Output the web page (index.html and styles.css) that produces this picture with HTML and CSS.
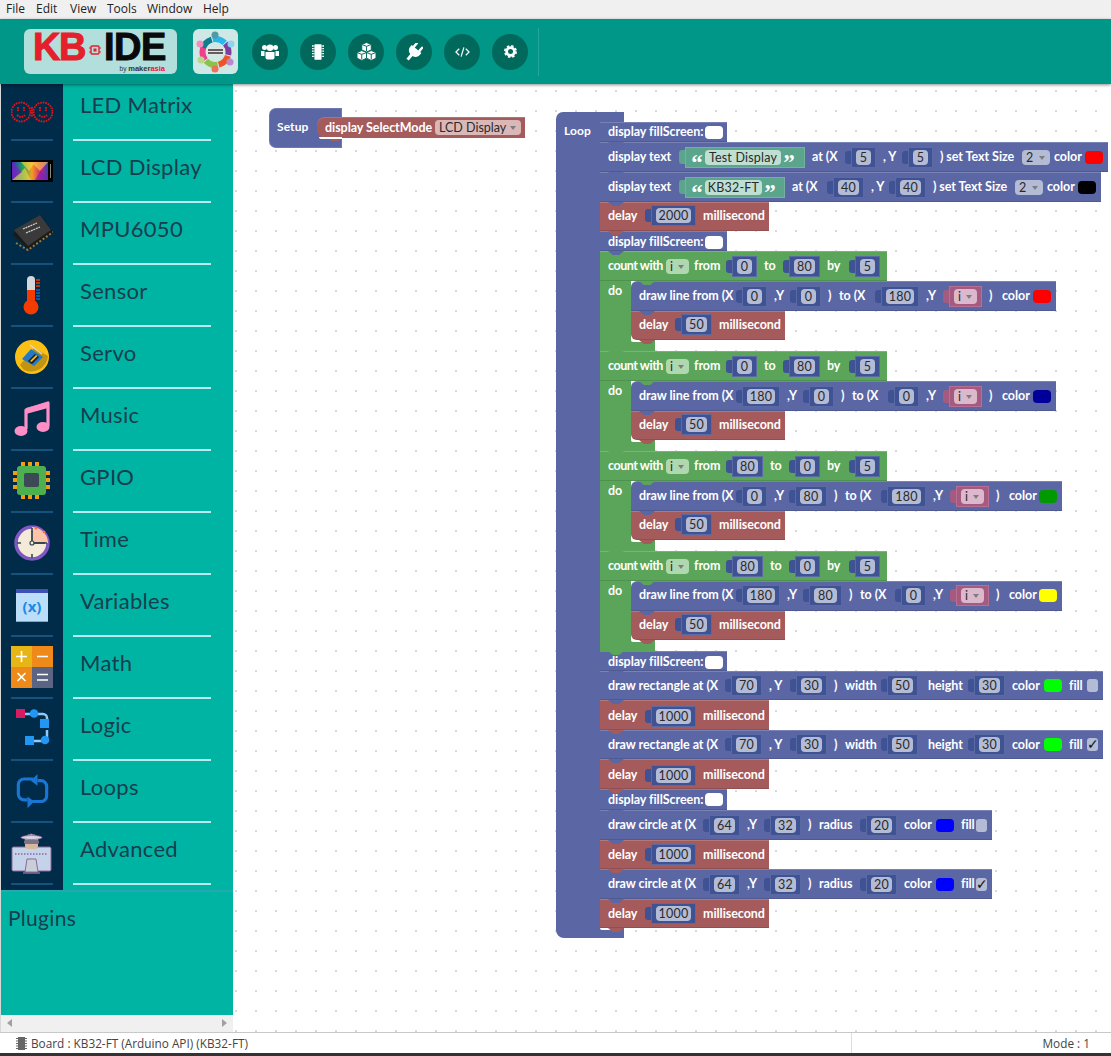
FILE: index.html
```html
<!DOCTYPE html>
<html lang="en">
<head>
<meta charset="utf-8">
<title>KB-IDE</title>
<link rel="stylesheet" href="styles.css">
</head>
<body>
<div class="app">
  <nav class="menubar"><span class="mi-file">File</span><span class="mi-edit">Edit</span><span class="mi-view">View</span><span class="mi-tools">Tools</span><span class="mi-window">Window</span><span class="mi-help">Help</span></nav>

  <header class="toolbar">
    <div class="logo">
      <span class="kb">KB</span>
      <svg class="logo-chip" viewBox="0 0 12 12" width="12" height="12"><rect x="2" y="2" width="8" height="8" rx="1" fill="none" stroke="#e3202c" stroke-width="1.4"/><rect x="4.5" y="4.5" width="3" height="3" fill="#e3202c"/><path d="M0 4h2M0 8h2M10 4h2M10 8h2" stroke="#e3202c"/></svg>
      <span class="ide">IDE</span>
      <span class="by">by <b>maker</b><b class="asia">asia</b></span>
    </div>
    <div class="community">
      <svg viewBox="0 0 45 45" width="45" height="45">
        <circle cx="22.500" cy="23" r="13" fill="none" stroke="#0f7d8c" stroke-width="6" stroke-dasharray="13 69" stroke-dashoffset="38"/>
        <circle cx="22.500" cy="23" r="13" fill="none" stroke="#29b6e8" stroke-width="6" stroke-dasharray="13 69" stroke-dashoffset="24"/>
        <circle cx="22.500" cy="23" r="13" fill="none" stroke="#7b3fa0" stroke-width="6" stroke-dasharray="13 69" stroke-dashoffset="10"/>
        <circle cx="22.500" cy="23" r="13" fill="none" stroke="#ef5326" stroke-width="6" stroke-dasharray="13 69" stroke-dashoffset="-4"/>
        <circle cx="22.500" cy="23" r="13" fill="none" stroke="#8bc34a" stroke-width="6" stroke-dasharray="13 69" stroke-dashoffset="-18"/>
        <circle cx="22.500" cy="23" r="13" fill="none" stroke="#ec3f8c" stroke-width="6" stroke-dasharray="13 69" stroke-dashoffset="-32"/>
        <circle cx="22" cy="6" r="3.500" fill="#4e9aa6"/><circle cx="38" cy="15" r="3.500" fill="#8fd3ee"/><circle cx="37" cy="33" r="3.500" fill="#b78ad0"/><circle cx="22" cy="40" r="3.500" fill="#f0705a"/><circle cx="8" cy="31" r="3.500" fill="#b5d98c"/><circle cx="7" cy="15" r="3.500" fill="#f28cbc"/>
        <rect x="13" y="19" width="19" height="7" rx="1" fill="#e4e4e4"/><path d="M15 21h15M15 24h15" stroke="#333" stroke-width="1.300"/>
      </svg>
    </div>
    <div class="tools">
      <span class="tool"><svg viewBox="0 0 18 16" width="18" height="16" fill="#fff"><circle cx="3.500" cy="3.500" r="2.500"/><circle cx="14.500" cy="3.500" r="2.500"/><circle cx="9" cy="3.800" r="3.300"/><path d="M0 7h3.500v5H0zM14.500 7H18v5h-3.500z"/><path d="M4.500 8h9v5.500a2 2 0 0 1-2 2h-5a2 2 0 0 1-2-2z"/></svg></span>
      <span class="tool"><svg viewBox="0 0 14 18" width="12" height="16" fill="#fff"><rect x="2.500" y="0" width="9" height="18" rx="1"/><path d="M0 2h14M0 5h14M0 8h14M0 11h14M0 14h14" stroke="#fff" stroke-width="1.500"/><path d="M2.500 0v18M11.500 0v18" stroke="#00695c" stroke-width=".6"/></svg></span>
      <span class="tool"><svg viewBox="0 0 22 20" width="21" height="19"><g fill="#fff" stroke="#00695c" stroke-width="1"><path d="M11 .5l5 2v6l-5 2-5-2v-6z"/><path d="M6 9l5 2v6l-5 2.500-5-2.500v-6z"/><path d="M16 9l5 2v6l-5 2.500-5-2.500v-6z"/></g><path d="M6.500 2.800l4.500 1.800 4.500-1.800M11 4.600v5M1.500 11.300L6 13l4.500-1.700M6 13v5.500M11.500 11.300L16 13l4.500-1.700M16 13v5.500" fill="none" stroke="#00695c" stroke-width="1"/></svg></span>
      <span class="tool"><svg viewBox="0 0 18 18" width="18" height="18" fill="#fff"><g transform="rotate(40 9 9)"><rect x="4.300" y="-.5" width="2.400" height="6" rx=".6"/><rect x="11.300" y="-.5" width="2.400" height="6" rx=".6"/><path d="M2.700 5h12.600v2.500a6 6 0 0 1-4.800 5.500V19h-3v-6a6 6 0 0 1-4.800-5.500z"/></g></svg></span>
      <span class="tool"><svg viewBox="0 0 16 12" width="15" height="12" fill="none" stroke="#fff" stroke-width="1.300"><path d="M4.500 2.500L1 6l3.500 3.500M11.500 2.500L15 6l-3.500 3.500M9.500 1L6.500 11"/></svg></span>
      <span class="tool"><svg viewBox="0 0 16 16" width="13" height="13"><circle cx="8" cy="8" r="4.800" fill="none" stroke="#fff" stroke-width="3.400"/><circle cx="8" cy="8" r="7" fill="none" stroke="#fff" stroke-width="2" stroke-dasharray="3 2.500"/></svg></span>
    </div>
    <span class="tool-divider"></span>
  </header>

  <main class="main">
    <aside class="sidebar">
      <div class="cats">
        <div class="cat cat-first">
          <div class="cat-icon"><svg viewBox="0 0 42 24" width="42" height="24"><g fill="none" stroke="#e0141c" stroke-width="1.900" stroke-dasharray="1.700 .9"><circle cx="10" cy="12" r="9.500"/><circle cx="32" cy="12" r="9.500"/><path d="M7 7v4M13 7v4M29 7v4M35 7v4M6 15q4 4 8 0M28 15q4 4 8 0M21 7v10"/></g></svg></div>
          <div class="cat-label">LED Matrix</div>
        </div>
        <div class="cat">
          <div class="cat-icon"><svg viewBox="0 0 42 22" width="42" height="22"><defs><linearGradient id="lcd" x1="0" y1="0" x2="1" y2="0"><stop offset="0" stop-color="#3a2bc8"/><stop offset=".3" stop-color="#1fa35a"/><stop offset=".55" stop-color="#f4a020"/><stop offset=".8" stop-color="#d4206c"/><stop offset="1" stop-color="#3040c0"/></linearGradient></defs><rect width="42" height="22" fill="#000"/><rect x="1" y="2" width="36" height="18" fill="url(#lcd)"/><path d="M1 20L14 8l6 12zM20 2l9 9 8-9zM10 2l8 9 6-9z" fill="#ffd94a" opacity=".6"/><path d="M1 2l10 10L1 20zM24 20l6-10 7 10z" fill="#7d1fc0" opacity=".7"/><rect x="39" y="4" width="1" height="14" fill="#888"/></svg></div>
          <div class="cat-label">LCD Display</div>
        </div>
        <div class="cat">
          <div class="cat-icon"><svg viewBox="0 0 42 38" width="42" height="38"><path d="M1 20L29 1l13 17-24 18z" fill="#1a1a1a"/><path d="M3 16L29 1l11 15-23 16z" fill="#3a3a3a"/><path d="M5 29l12 7 25-18" fill="none" stroke="#a07a35" stroke-width="2" stroke-dasharray="2 2"/><path d="M12 15l14-6M15 19l14-6" stroke="#ccc" stroke-width="1.300" stroke-dasharray="2 .7"/></svg></div>
          <div class="cat-label">MPU6050</div>
        </div>
        <div class="cat">
          <div class="cat-icon"><svg viewBox="0 0 42 40" width="42" height="40"><rect x="16" y="1" width="8" height="26" rx="4" fill="#d4d8dc"/><rect x="16" y="15" width="8" height="14" fill="#f43b00"/><circle cx="20" cy="32" r="7.500" fill="#f43b00"/><path d="M25 5h4M25 8h4M25 11h4" stroke="#f43b00" stroke-width="1.500"/><path d="M25 15h4M25 18h4M25 21h4M25 24h4" stroke="#1565c0" stroke-width="1.500"/></svg></div>
          <div class="cat-label">Sensor</div>
        </div>
        <div class="cat">
          <div class="cat-icon"><svg viewBox="0 0 42 42" width="42" height="42"><circle cx="21" cy="21" r="17" fill="#fcc015"/><path d="M9 29l14-17 14 8a17 17 0 0 1-24 14z" fill="#c39312"/><path d="M11 23l9-10 12 8-9 9z" fill="#2179c8"/><path d="M17 25l7-7 4 3-7 7z" fill="#1a1a1a"/><path d="M19 25l6-6 1.500 1-6 6z" fill="#fcc015"/><path d="M19 9l12 9" stroke="#d8d8d8" stroke-width="1.200"/></svg></div>
          <div class="cat-label">Servo</div>
        </div>
        <div class="cat">
          <div class="cat-icon"><svg viewBox="0 0 42 38" width="42" height="38"><path d="M15 29V10L37 3v23" fill="none" stroke="#fd8fc6" stroke-width="3.200" stroke-linejoin="round"/><path d="M15 8l22-6v6l-22 6z" fill="#fd8fc6"/><ellipse cx="10" cy="31" rx="6.500" ry="5" fill="#fd8fc6"/><ellipse cx="32" cy="27" rx="6.500" ry="5" fill="#fd8fc6"/></svg></div>
          <div class="cat-label">Music</div>
        </div>
        <div class="cat">
          <div class="cat-icon"><svg viewBox="0 0 42 42" width="42" height="42"><g fill="#f39c12"><rect x="10" y="2" width="4" height="5"/><rect x="17" y="2" width="4" height="5"/><rect x="24" y="2" width="4" height="5"/><rect x="10" y="34" width="4" height="5"/><rect x="17" y="34" width="4" height="5"/><rect x="24" y="34" width="4" height="5"/><rect x="2" y="11" width="5" height="4"/><rect x="2" y="18" width="5" height="4"/><rect x="2" y="25" width="5" height="4"/><rect x="34" y="11" width="5" height="4"/><rect x="34" y="18" width="5" height="4"/><rect x="34" y="25" width="5" height="4"/></g><rect x="6" y="6" width="29" height="29" rx="3" fill="#4caf50"/><rect x="13" y="13" width="15" height="14" rx="2" fill="#3c4a55"/></svg></div>
          <div class="cat-label">GPIO</div>
        </div>
        <div class="cat">
          <div class="cat-icon"><svg viewBox="0 0 42 42" width="42" height="42"><circle cx="21" cy="21" r="16" fill="#f3ead8" stroke="#7e57c2" stroke-width="3.500"/><path d="M21 21V5a16 16 0 0 1 16 16z" fill="#fbc3a8"/><path d="M21 6v4M21 32v4M6 21h4M32 21h4" stroke="#37474f" stroke-width="1.600"/><path d="M21 21V9M21 21h13" stroke="#37474f" stroke-width="1.800"/><circle cx="21" cy="21" r="2" fill="#f3ead8" stroke="#37474f" stroke-width="1.200"/><circle cx="25" cy="6" r="1.500" fill="#ff7043"/><circle cx="33" cy="10" r="1.300" fill="#ff7043"/></svg></div>
          <div class="cat-label">Time</div>
        </div>
        <div class="cat">
          <div class="cat-icon"><div class="var-icon"><span class="var-x">(x)</span></div></div>
          <div class="cat-label">Variables</div>
        </div>
        <div class="cat">
          <div class="cat-icon"><svg viewBox="0 0 42 42" width="42" height="42"><rect width="21" height="21" fill="#e8b516"/><rect x="21" width="21" height="21" fill="#ee8a1a"/><rect y="21" width="21" height="21" fill="#ee8a1a"/><rect x="21" y="21" width="21" height="21" fill="#5c6484"/><path d="M10.500 5v11M5 10.500h11M26 10.500h11M6.500 27l8 8M14.500 27l-8 8M26 28.500h11M26 34h11" stroke="#fff" stroke-width="1.600"/></svg></div>
          <div class="cat-label">Math</div>
        </div>
        <div class="cat">
          <div class="cat-icon"><svg viewBox="0 0 42 42" width="42" height="42"><path d="M8 6h24a4 4 0 0 1 4 4v8M36 22v10a1 1 0 0 1-1 1H16" fill="none" stroke="#90caf9" stroke-width="2.500"/><rect x="5" y="1" width="9" height="9" fill="#d81b60"/><circle cx="23" cy="5.500" r="4.300" fill="#2196f3"/><rect x="29" y="11" width="9" height="9" fill="#2196f3"/><rect x="14" y="28" width="9" height="9" fill="#2196f3"/><circle cx="34" cy="32" r="4.300" fill="#2196f3"/></svg></div>
          <div class="cat-label">Logic</div>
        </div>
        <div class="cat">
          <div class="cat-icon"><svg viewBox="0 0 42 42" width="35" height="35"><path d="M22 6H11a7 7 0 0 0-7 7v11a7 7 0 0 0 7 7h4M20 33h11a7 7 0 0 0 7-7V15a7 7 0 0 0-7-7h-4" fill="none" stroke="#1976d2" stroke-width="3.800"/><path d="M27 0l-8 8 8 6zM15 27l8 6-8 8z" fill="#1976d2"/></svg></div>
          <div class="cat-label">Loops</div>
        </div>
        <div class="cat">
          <div class="cat-icon"><svg viewBox="0 0 42 44" width="42" height="44"><rect x="1" y="16" width="39" height="24" rx="1.500" fill="#c5d3ea" stroke="#8a6a96" stroke-width="1"/><path d="M4 23h33" stroke="#8a6a96" stroke-width="1.500" stroke-dasharray="1.500 1.500"/><path d="M16 28h9l2 13H14z" fill="#c9ced8" stroke="#8a6a96"/><path d="M12 42h17" stroke="#8a6a96" stroke-width="1.500"/><path d="M14 7h13v8a3 3 0 0 1-3 3h-7a3 3 0 0 1-3-3z" fill="#d9b79e"/><rect x="13" y="9" width="15" height="4" rx="1.500" fill="#7a7488"/><path d="M14 6q6-6 13 0z" fill="#d8d4e2" stroke="#8a6a96" stroke-width=".8"/><ellipse cx="20.500" cy="6.500" rx="10.500" ry="2" fill="#d8d4e2" stroke="#8a6a96" stroke-width=".8"/></svg></div>
          <div class="cat-label">Advanced</div>
        </div>
      </div>
      <div class="plugins"><span class="plugins-title">Plugins</span></div>
      <div class="hscroll"><span class="arrow-left"></span><span class="arrow-right"></span></div>
    </aside>

    <section class="workspace">
      <div class="setup">
        <span class="side-text">Setup</span>
        <div class="setmode">
          <span class="l first w106">display SelectMode</span>
          <span class="dd dd-red w86">LCD Display</span>
        </div>
      </div>

      <div class="loop">
        <div class="cap"></div>
        <div class="loop-body">
          <div class="loop-side"><span class="side-text">Loop</span></div>
          <div class="stack">
            <div class="row blue h20"><span class="l first w93">display fillScreen:</span><span class="sw white"></span></div>

            <div class="row blue"><span class="l first w70">display text</span><span class="str w120"><i class="q">“</i><span class="sf w76">Test Display</span><i class="q">”</i></span><span class="l w33">at (X</span><span class="num n25"><b>5</b></span><span class="l w19">, Y</span><span class="num n25"><b>5</b></span><span class="l w78">) set Text Size</span><span class="dd dd-blue w28">2</span><span class="l w27 g4">color</span><span class="sw red"></span></div>

            <div class="row blue"><span class="l first w70">display text</span><span class="str w100"><i class="q">“</i><span class="sf w57">KB32-FT</span><i class="q">”</i></span><span class="l w35">at (X</span><span class="num n31"><b>40</b></span><span class="l w18">, Y</span><span class="num n31"><b>40</b></span><span class="l w78">) set Text Size</span><span class="dd dd-blue w28">2</span><span class="l w27 g4">color</span><span class="sw black"></span></div>

            <div class="row red-b h29 up"><span class="l first w37">delay</span><span class="num n45"><b>2000</b></span><span class="l w57 tail">millisecond</span></div>

            <div class="row blue h20 down"><span class="l first w93">display fillScreen:</span><span class="sw white"></span></div>

            <div class="count">
              <div class="row green c-head"><span class="l first w54 tight">count with</span><span class="dd dd-green w23">i</span><span class="l w32 g5">from</span><span class="num n25"><b>0</b></span><span class="l w19">to</span><span class="num n31"><b>80</b></span><span class="l w22">by</span><span class="num n25"><b>5</b></span></div>
              <div class="c-body">
                <div class="c-do">do</div>
                <div class="c-inner">
                  <div class="row blue c-first"><span class="l first w97">draw line from (X</span><span class="num n25"><b>0</b></span><span class="l w16">,Y</span><span class="num n25"><b>0</b></span><span class="l w4">)</span><span class="l w36">to (X</span><span class="num n38"><b>180</b></span><span class="l w17">,Y</span><span class="var w33"><span class="dd dd-pink">i</span></span><span class="l w6">)</span><span class="l w27">color</span><span class="sw red"></span></div>
                  <div class="row red-b h29 c-last up"><span class="l first w36">delay</span><span class="num n31"><b>50</b></span><span class="l w57 tail">millisecond</span></div>
                </div>
              </div>
              <div class="c-foot"></div>
            </div>

            <div class="count">
              <div class="row green c-head"><span class="l first w54 tight">count with</span><span class="dd dd-green w23">i</span><span class="l w32 g5">from</span><span class="num n25"><b>0</b></span><span class="l w19">to</span><span class="num n31"><b>80</b></span><span class="l w22">by</span><span class="num n25"><b>5</b></span></div>
              <div class="c-body">
                <div class="c-do">do</div>
                <div class="c-inner">
                  <div class="row blue c-first"><span class="l first w97">draw line from (X</span><span class="num n38"><b>180</b></span><span class="l w16">,Y</span><span class="num n25"><b>0</b></span><span class="l w4">)</span><span class="l w36">to (X</span><span class="num n25"><b>0</b></span><span class="l w17">,Y</span><span class="var w33"><span class="dd dd-pink">i</span></span><span class="l w6">)</span><span class="l w27">color</span><span class="sw navy"></span></div>
                  <div class="row red-b h29 c-last up"><span class="l first w36">delay</span><span class="num n31"><b>50</b></span><span class="l w57 tail">millisecond</span></div>
                </div>
              </div>
              <div class="c-foot"></div>
            </div>

            <div class="count">
              <div class="row green c-head"><span class="l first w54 tight">count with</span><span class="dd dd-green w23">i</span><span class="l w32 g5">from</span><span class="num n31"><b>80</b></span><span class="l w19">to</span><span class="num n25"><b>0</b></span><span class="l w22">by</span><span class="num n25"><b>5</b></span></div>
              <div class="c-body">
                <div class="c-do">do</div>
                <div class="c-inner">
                  <div class="row blue c-first"><span class="l first w97">draw line from (X</span><span class="num n25"><b>0</b></span><span class="l w15">,Y</span><span class="num n32"><b>80</b></span><span class="l w4">)</span><span class="l w36">to (X</span><span class="num n39"><b>180</b></span><span class="l w17">,Y</span><span class="var w33"><span class="dd dd-pink">i</span></span><span class="l w6">)</span><span class="l w26">color</span><span class="sw darkgreen"></span></div>
                  <div class="row red-b h29 c-last up"><span class="l first w36">delay</span><span class="num n31"><b>50</b></span><span class="l w57 tail">millisecond</span></div>
                </div>
              </div>
              <div class="c-foot"></div>
            </div>

            <div class="count">
              <div class="row green c-head"><span class="l first w54 tight">count with</span><span class="dd dd-green w23">i</span><span class="l w32 g5">from</span><span class="num n31"><b>80</b></span><span class="l w19">to</span><span class="num n25"><b>0</b></span><span class="l w22">by</span><span class="num n25"><b>5</b></span></div>
              <div class="c-body">
                <div class="c-do">do</div>
                <div class="c-inner">
                  <div class="row blue c-first up"><span class="l first w97">draw line from (X</span><span class="num n38"><b>180</b></span><span class="l w16">,Y</span><span class="num n33"><b>80</b></span><span class="l w4">)</span><span class="l w35">to (X</span><span class="num n25"><b>0</b></span><span class="l w17">,Y</span><span class="var w33"><span class="dd dd-pink">i</span></span><span class="l w6">)</span><span class="l w26">color</span><span class="sw yellow"></span></div>
                  <div class="row red-b h29 c-last up"><span class="l first w36">delay</span><span class="num n31"><b>50</b></span><span class="l w57 tail">millisecond</span></div>
                </div>
              </div>
              <div class="c-foot"></div>
            </div>

            <div class="row blue h20 down"><span class="l first w93">display fillScreen:</span><span class="sw white"></span></div>

            <div class="row blue h29"><span class="l first w117">draw rectangle at (X</span><span class="num n31"><b>70</b></span><span class="l w21">, Y</span><span class="num n31"><b>30</b></span><span class="l w4">)</span><span class="l w36">width</span><span class="num n31"><b>50</b></span><span class="l w40 g10">height</span><span class="num n31"><b>30</b></span><span class="l w28">color</span><span class="sw lime"></span><span class="l w14">fill</span><span class="chk"></span></div>
            <div class="row red-b down"><span class="l first w37">delay</span><span class="num n45"><b>1000</b></span><span class="l w57 tail">millisecond</span></div>
            <div class="row blue h29"><span class="l first w117">draw rectangle at (X</span><span class="num n31"><b>70</b></span><span class="l w21">, Y</span><span class="num n31"><b>30</b></span><span class="l w4">)</span><span class="l w36">width</span><span class="num n31"><b>50</b></span><span class="l w40 g10">height</span><span class="num n31"><b>30</b></span><span class="l w28">color</span><span class="sw lime"></span><span class="l w14">fill</span><span class="chk">✓</span></div>
            <div class="row red-b down"><span class="l first w37">delay</span><span class="num n45"><b>1000</b></span><span class="l w57 tail">millisecond</span></div>

            <div class="row blue h21"><span class="l first w93">display fillScreen:</span><span class="sw white"></span></div>

            <div class="row blue"><span class="l first w95">draw circle at (X</span><span class="num n31"><b>64</b></span><span class="l w17">,Y</span><span class="num n31"><b>32</b></span><span class="l w4">)</span><span class="l w41">radius</span><span class="num n31"><b>20</b></span><span class="l w28">color</span><span class="sw blue-sw"></span><span class="l w11">fill</span><span class="chk"></span></div>
            <div class="row red-b h29"><span class="l first w37">delay</span><span class="num n45"><b>1000</b></span><span class="l w57 tail">millisecond</span></div>
            <div class="row blue"><span class="l first w95">draw circle at (X</span><span class="num n31"><b>64</b></span><span class="l w17">,Y</span><span class="num n31"><b>32</b></span><span class="l w4">)</span><span class="l w41">radius</span><span class="num n31"><b>20</b></span><span class="l w28">color</span><span class="sw blue-sw"></span><span class="l w11">fill</span><span class="chk">✓</span></div>
            <div class="row red-b h29"><span class="l first w37">delay</span><span class="num n45"><b>1000</b></span><span class="l w57 tail">millisecond</span></div>
          </div>
        </div>
        <div class="cap cap-bottom"></div>
      </div>
    </section>
  </main>

  <footer class="status">
    <div class="status-board">
      <svg viewBox="0 0 11 13" width="11" height="13" fill="#666"><rect x="2" width="7" height="13"/><path d="M0 1.500h11M0 4h11M0 6.500h11M0 9h11M0 11.500h11" stroke="#666"/></svg>
      <span>Board : KB32-FT (Arduino API) (KB32-FT)</span>
    </div>
    <div class="status-mode">Mode : 1</div>
  </footer>
</div>
</body>
</html>
```

FILE: styles.css
```css
* { box-sizing: border-box; }
html, body { margin: 0; height: 100%; overflow: hidden; background: #fff; }
body { font-family: "Open Sans", "Noto Sans", sans-serif; }
.app { width: 1111px; height: 1056px; display: flex; flex-direction: column; }

/* menu */
.menubar { height: 19px; flex: none; background: #f0f0f0; font-size: 12px; line-height: 18px; color: #222; display: flex; padding-left: 6px; }
.menubar span { display: block; flex: none; }
.mi-file { width: 30px; }
.mi-edit { width: 34px; }
.mi-view { width: 37px; }
.mi-tools { width: 40px; }
.mi-window { width: 56px; }
.mi-help { width: 30px; }

/* toolbar */
.toolbar { height: 65px; flex: none; background: #009688; display: flex; align-items: center; padding: 0 0 0 24px; position: relative; z-index: 3; box-shadow: 0 1px 3px rgba(0,0,0,.45); }
.logo { width: 153px; height: 45px; background: #b2dfdb; border-radius: 6px; position: relative; display: flex; align-items: flex-start; padding: 5px 0 0 9px; font-family: "Liberation Sans", sans-serif; font-weight: 700; }
.kb { color: #e3202c; font-size: 38px; line-height: 27px; letter-spacing: -1.500px; -webkit-text-stroke: 1px #e3202c; width: 54px; }
.logo-chip { margin: 10px 3px 0 2px; flex: none; }
.ide { color: #0a0a0a; font-size: 38px; line-height: 27px; letter-spacing: -.5px; -webkit-text-stroke: 1px #0a0a0a; }
.by { position: absolute; right: 12px; bottom: 1px; font-size: 6.500px; line-height: 9px; font-weight: 400; color: #333; }
.by b { font-size: 7.500px; }
.asia { color: #e3202c; }
.community { width: 45px; height: 45px; margin-left: 16px; background: #cfe8e6; border-radius: 6px; overflow: hidden; flex: none; }
.community svg { display: block; }
.tools { display: flex; gap: 12px; margin-left: 14px; }
.tool { width: 36px; height: 36px; border-radius: 50%; background: #00695c; display: flex; align-items: center; justify-content: center; }
.tool-divider { width: 1px; height: 48px; background: #26a69a; margin-left: 10px; }

/* main */
.main { flex: 1; min-height: 0; display: flex; }
.sidebar { width: 233px; flex: none; display: flex; flex-direction: column; border-left: 1px solid #d8d8d8; background: #00b4a4; }
.cats { flex: none; height: 806px; display: flex; flex-direction: column; background: linear-gradient(90deg, #002b49 62px, #00b4a4 62px); }
.cat { height: 62px; flex: none; display: flex; font-family: Lato, sans-serif; }
.cat-first { height: 57px; }
.cat-icon { width: 62px; flex: none; padding: 0 10px 2px; height: 100%; position: relative; display: flex; justify-content: center; align-items: center; }
.cat-icon::after { content: ""; position: absolute; left: 10px; right: 10px; bottom: 0; height: 2px; background: #17527c; }
.cat-first .cat-icon { padding-bottom: 1px; }
.cat-label { width: 138px; margin-left: 10px; height: 100%; border-bottom: 2px solid #b8ecee; color: #173e4e; font-size: 22px; line-height: 28px; padding: 12px 0 0 7px; letter-spacing: .3px; }
.cat-first .cat-label { padding-top: 7px; }
.var-icon { width: 32px; height: 33px; background: #bbdefb; border-top: 4px solid #3f51b5; border-bottom: 1px solid #90a4ae; text-align: center; }
.var-x { font: 700 15px/27px "Open Sans", sans-serif; color: #1e88e5; }
.plugins { flex: 1; border-top: 2px solid #26a8b0; padding: 13px 0 0 7px; font: 21px/26px Lato, sans-serif; color: #173e4e; letter-spacing: .3px; }
.hscroll { height: 17px; flex: none; background: #f0f0f0; position: relative; }
.arrow-left, .arrow-right { position: absolute; top: 4px; width: 0; height: 0; border-top: 4.500px solid transparent; border-bottom: 4.500px solid transparent; }
.arrow-left { left: 6px; border-right: 5px solid #a0a0a0; }
.arrow-right { right: 6px; border-left: 5px solid #a0a0a0; }

/* status */
.status { height: 24px; flex: none; border-top: 1px solid #c8c8c8; border-bottom: 3px solid #333; background: #fff; display: flex; font-size: 11.800px; line-height: 20px; color: #444; }
.status-board { width: 852px; border-right: 1px solid #ddd; display: flex; align-items: center; gap: 4px; padding-left: 16px; }
.status-mode { flex: 1; text-align: right; padding-right: 21px; }

/* workspace */
.workspace { flex: 1; position: relative; background-color: #fff; background-image: radial-gradient(circle at 1px 1px, #d8d8d8 1px, transparent 1.200px); background-size: 20px 20px; background-position: 2px 6px; font-family: Lato, sans-serif; font-size: 12.500px; color: #fff; }
.setup { position: absolute; left: 36px; top: 24px; width: 73px; height: 40px; background: #5b67a5; border-radius: 7px 0 0 7px; box-shadow: inset 0 0 0 1px rgba(255,255,255,.12); padding-left: 8px; }
.side-text { line-height: 38px; font-weight: 700; display: block; font-size: 12px; letter-spacing: .1px; }
.setmode { position: absolute; left: 48px; top: 9px; height: 21px; width: 208px; background: #a55b5b; border-radius: 8px 0 0 8px; display: flex; align-items: center; padding-left: 8px; box-shadow: inset 0 1px rgba(255,255,255,.15); }
.setmode::after { content: ""; position: absolute; left: 10px; bottom: -3px; width: 16px; height: 4px; background: #a55b5b; clip-path: polygon(0 0,100% 0,70% 100%,30% 100%); }
.setup::after { content: ""; position: absolute; left: 50px; top: 29px; width: 23px; height: 2px; background: #fff; border-radius: 0 0 0 4px; }

.loop { position: absolute; left: 323px; top: 28px; width: 68px; }
.cap { width: 68px; height: 10px; background: #5b67a5; border-radius: 7px 0 0 0; }
.cap-bottom { border-radius: 0 0 0 8px; position: relative; }
.cap-bottom::before { content: ""; position: absolute; left: 44px; top: 0; width: 14px; height: 2px; background: #fff; border-radius: 0 0 0 4px; }
.loop-body { display: flex; }
.loop-side { width: 44px; flex: none; background: #5b67a5; padding-left: 8px; }
.loop-side .side-text { line-height: 18px; }
.stack { display: flex; flex-direction: column; align-items: flex-start; width: 511px; }

/* rows */
.row { position: relative; display: flex; align-items: center; width: max-content; height: 30px; padding-left: 8px; box-shadow: inset 0 1px rgba(255,255,255,.18), inset 0 -1px rgba(0,0,0,.12); padding-right: 5px; }
.row::after { content: ""; position: absolute; left: 8px; bottom: -4px; width: 16px; height: 4px; background: inherit; clip-path: polygon(0 0,100% 0,70% 100%,30% 100%); z-index: 2; }
.h20 { height: 20px; padding-right: 4px; }
.h21 { height: 21px; padding-right: 4px; }
.h29 { height: 29px; }
.up { padding-bottom: 2px; }
.down { padding-top: 2px; }
.blue { background: #5b67a5; }
.red-b { background: #a55b5b; }
.green { background: #5ba55b; }

.l { margin-left: 7px; flex: none; white-space: nowrap; font-weight: 700; line-height: 16px; letter-spacing: -.05px; }
.l.first { margin-left: 0; }
.l.g4 { margin-left: 4px; }
.l.g5 { margin-left: 5px; }
.l.g10 { margin-left: 10px; }
.l.tight { letter-spacing: -.45px; }
.l.tail { margin-right: 4px; }
.w4 { width: 4px; } .w6 { width: 6px; } .w11 { width: 11px; } .w14 { width: 14px; } .w15 { width: 15px; }
.w16 { width: 16px; } .w17 { width: 17px; } .w18 { width: 18px; } .w19 { width: 19px; } .w21 { width: 21px; }
.w22 { width: 22px; } .w23 { width: 23px; } .w26 { width: 26px; } .w27 { width: 27px; } .w28 { width: 28px; }
.w32 { width: 32px; } .w33 { width: 33px; } .w35 { width: 35px; } .w36 { width: 36px; } .w37 { width: 37px; }
.w40 { width: 40px; } .w41 { width: 41px; } .w54 { width: 54px; } .w57 { width: 57px; } .w70 { width: 70px; }
.w76 { width: 76px; } .w78 { width: 78px; } .w86 { width: 86px; } .w93 { width: 93px; } .w95 { width: 95px; }
.w97 { width: 97px; } .w100 { width: 100px; } .w106 { width: 106px; } .w117 { width: 117px; } .w120 { width: 120px; }

.num { position: relative; flex: none; height: 21px; margin-left: 6px; background: #3f5294; border: 1px solid #5a6ba3; padding: 2px 4px; display: flex; }
.num::before { content: ""; position: absolute; left: -7px; top: 3px; width: 6px; height: 13px; background: #3f5294; border-radius: 3px 0 0 3px; }
.num b { flex: 1; background: #b4bbd4; border-radius: 4px; color: #2a2a2a; font-weight: 400; font-size: 12.500px; line-height: 15px; text-align: center; letter-spacing: .2px; }
.n25 { width: 25px; } .n31 { width: 31px; } .n32 { width: 32px; } .n33 { width: 33px; } .n38 { width: 38px; } .n39 { width: 39px; } .n45 { width: 45px; }
.c-head { padding-right: 7px; }

.str { position: relative; flex: none; height: 21px; margin-left: 7px; background: #5ba58c; box-shadow: inset 0 0 0 1px rgba(255,255,255,.15); display: flex; align-items: center; padding-left: 6px; gap: 2px; }
.str::before { content: ""; position: absolute; left: -6px; top: 3px; width: 6px; height: 14px; background: #5ba58c; border-radius: 3px 0 0 3px; }
.q { font: 700 23px/26px "Liberation Serif", serif; color: #fff; width: 12px; text-align: center; height: 15px; overflow: visible; }
.sf { height: 15px; flex: none; background: #bfdfd2; border-radius: 4px; color: #2a2a2a; font-size: 12.500px; line-height: 15px; text-align: center; font-weight: 400; letter-spacing: .2px; }

.dd { flex: none; height: 15px; margin-left: 4px; border-radius: 4px; color: #2a2a2a; font-size: 12.500px; line-height: 15px; display: flex; align-items: center; padding-left: 4px; position: relative; font-weight: 400; letter-spacing: .2px; }
.dd::after { content: ""; position: absolute; right: 5px; top: 6px; border-left: 3px solid transparent; border-right: 3px solid transparent; border-top: 4px solid #7d7d7d; }
.dd-blue { background: #b4bbd4; }
.dd-green { background: #b0d8b0; }
.dd-red { background: #dbb8b8; letter-spacing: 0; }
.dd-pink { background: #dbb8cb; margin: 0; flex: 1; }

.var { position: relative; flex: none; height: 21px; margin-left: 6px; background: #a55b80; border: 1px solid #b86f93; padding: 2px 4px; display: flex; }
.var::before { content: ""; position: absolute; left: -7px; top: 3px; width: 6px; height: 13px; background: #a55b80; border-radius: 3px 0 0 3px; }

.sw { flex: none; width: 18px; height: 13px; margin-left: 4px; border-radius: 4px; }
.white { background: #fff; } .red { background: #f00; } .black { background: #000; } .navy { background: #000099; }
.darkgreen { background: #009900; } .yellow { background: #ff0; } .lime { background: #0f0; } .blue-sw { background: #00f; }
.chk { flex: none; width: 11px; height: 13px; margin-left: 4px; border-radius: 3px; background: #b4bbd4; color: #111; font: 700 14px/13px "DejaVu Sans", sans-serif; text-align: center; overflow: visible; }

/* count loop */
.count { display: flex; flex-direction: column; align-items: flex-start; height: 100px; }
.c-head::after { left: 39px; }
.c-body { display: flex; }
.c-do { width: 31px; height: 59px; flex: none; background: #5ba55b; padding: 1px 0 0 8px; font-weight: 700; line-height: 18px; }
.c-inner { display: flex; flex-direction: column; align-items: flex-start; }
.c-first { border-radius: 6px 0 0 0; }
.c-last { border-radius: 0 0 0 6px; }
.c-foot { width: 55px; height: 11px; background: #5ba55b; position: relative; }
.c-foot::before { content: ""; position: absolute; left: 31px; top: 0; width: 14px; height: 2px; background: #fff; border-radius: 0 0 0 4px; }
.c-foot::after { content: ""; position: absolute; left: 8px; bottom: -4px; width: 16px; height: 4px; background: #5ba55b; clip-path: polygon(0 0,100% 0,70% 100%,30% 100%); z-index: 2; }
```
